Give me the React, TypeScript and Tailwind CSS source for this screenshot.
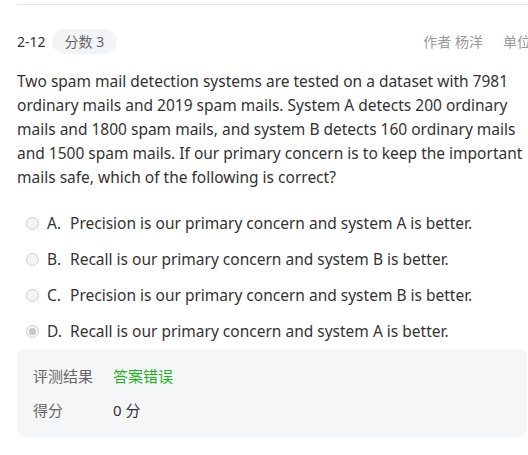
import React from "react";

const font = { fontFamily: '"Noto Sans", "Noto Sans CJK SC", sans-serif' };

function Radio({ checked }: { checked?: boolean }) {
  return (
    <span className="flex h-[13px] w-[13px] shrink-0 items-center justify-center rounded-full border border-[#d0d0d0] bg-[#f4f4f4]">
      {checked && <span className="h-[7px] w-[7px] rounded-full bg-[#c8c8c8]" />}
    </span>
  );
}

const options = [
  ["A.", "Precision is our primary concern and system A is better."],
  ["B.", "Recall is our primary concern and system B is better."],
  ["C.", "Precision is our primary concern and system B is better."],
  ["D.", "Recall is our primary concern and system A is better."],
];

export default function App() {
  return (
    <div className="h-[455px] w-[528px] overflow-hidden bg-white pl-[17px] text-[#333]" style={font}>
      <div className="mt-[4px] h-px w-[520px] bg-[#e6e6e6]" />
      <div className="mt-[24px] flex h-[25px] w-[514px] items-center">
        <span className="text-[14px] text-[#333]">2-12</span>
        <span className="ml-[6px] flex h-[25px] items-center rounded-full bg-[#f3f4f6] px-[13px] text-[14px] text-[#666]">
          分数 3
        </span>
        <div className="ml-auto flex items-center text-[14px] text-[#999]">
          <span>作者 杨洋</span>
          <span className="ml-[20px]">单位</span>
        </div>
      </div>
      <p className="mt-[15px] w-[510px] text-[15.5px] leading-[24px] text-[#333]">
        Two spam mail detection systems are tested on a dataset with 7981 ordinary mails and 2019 spam mails. System A
        detects 200 ordinary mails and 1800 spam mails, and system B detects 160 ordinary mails and 1500 spam mails. If
        our primary concern is to keep the important mails safe, which of the following is correct?
      </p>
      <div className="mt-[22px] flex flex-col gap-[12px] pl-[9px]">
        {options.map(([k, t], i) => (
          <div key={k} className="flex h-[24px] items-center text-[15.5px] leading-[24px] text-[#333]">
            <Radio checked={i === 3} />
            <span className="ml-[8px] w-[23px]">{k}</span>
            <span>{t}</span>
          </div>
        ))}
      </div>
      <div className="mt-[6px] flex h-[88px] w-[510px] flex-col justify-center gap-[10px] rounded-[8px] bg-[#f5f6f8] pl-[16px] text-[15px]">
        <div className="flex items-center leading-[24px]">
          <span className="w-[80px] text-[#666]">评测结果</span>
          <span className="text-[#1ab31a]">答案错误</span>
        </div>
        <div className="flex items-center leading-[24px]">
          <span className="w-[80px] text-[#666]">得分</span>
          <span className="text-[#333]">0 分</span>
        </div>
      </div>
    </div>
  );
}
